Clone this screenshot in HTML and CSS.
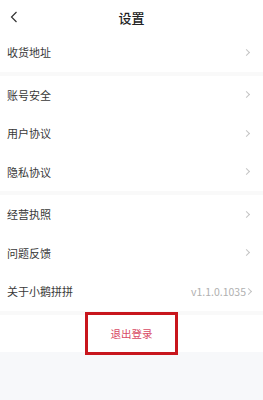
FILE: index.html
```html
<!DOCTYPE html>
<html lang="zh-CN">
<head>
    <meta charset="UTF-8">
    <meta name="viewport" content="width=device-width, initial-scale=1.0">
    <title>设置</title>
    <link rel="stylesheet" href="styles.css">
</head>
<body>

    <!-- Header -->
    <div class="header">
        <svg class="back" width="8" height="12" viewBox="0 0 8 12">
            <polyline points="6.5,1 1.5,6 6.5,11" fill="none" stroke="#333" stroke-width="1.2"/>
        </svg>
        <h1>设置</h1>
    </div>

    <div class="group">
        <div class="row"><span>收货地址</span><i class="arrow"></i></div>
    </div>

    <div class="group">
        <div class="row"><span>账号安全</span><i class="arrow"></i></div>
        <div class="row"><span>用户协议</span><i class="arrow"></i></div>
        <div class="row"><span>隐私协议</span><i class="arrow"></i></div>
    </div>

    <div class="group">
        <div class="row"><span>经营执照</span><i class="arrow"></i></div>
        <div class="row"><span>问题反馈</span><i class="arrow"></i></div>
        <div class="row"><span>关于小鹅拼拼</span><span class="version">v1.1.0.1035<i class="arrow"></i></span></div>
    </div>

    <!-- Logout -->
    <div class="logout">
        <div class="logout-btn">退出登录</div>
    </div>

</body>
</html>
```

FILE: styles.css
```css
body {
    margin: 0;
    padding: 0;
    font-family: "Noto Sans CJK SC", "Noto Sans", sans-serif;
    background: #f7f8fa;
    height: 400px;
    overflow: hidden;
}

/* Header */
.header {
    position: relative;
    height: 33px;
    background: #fff;
    display: flex;
    align-items: center;
    justify-content: center;
}

.header h1 {
    margin: 0;
    font-size: 13px;
    font-weight: 500;
    color: #222;
    padding-top: 2px;
}

.back {
    position: absolute;
    left: 10px;
    top: 11px;
}

/* Settings groups */
.group {
    background: #fff;
    border-bottom: 4px solid #f9f9f9;
}

.row {
    height: 38.5px;
    padding: 0 13px 0 7px;
    display: flex;
    align-items: center;
    justify-content: space-between;
    font-size: 11px;
    color: #383838;
}

.group:first-of-type .row {
    height: 37.5px;
}

.version {
    color: #b0b0b0;
    font-size: 10.5px;
    display: flex;
    align-items: center;
    margin-right: -2px;
}

.arrow {
    display: inline-block;
    width: 4px;
    height: 4px;
    border-top: 1px solid #c4c4c4;
    border-right: 1px solid #c4c4c4;
    transform: rotate(45deg);
    margin-right: 1px;
}

/* Logout */
.logout {
    background: #fff;
    height: 37px;
    display: flex;
    justify-content: center;
}

.logout-btn {
    box-sizing: border-box;
    width: 93px;
    height: 43px;
    margin-top: -3px;
    border: 3px solid #c8161d;
    display: flex;
    align-items: center;
    justify-content: center;
    font-size: 10.5px;
    color: #d84a64;
}
```
